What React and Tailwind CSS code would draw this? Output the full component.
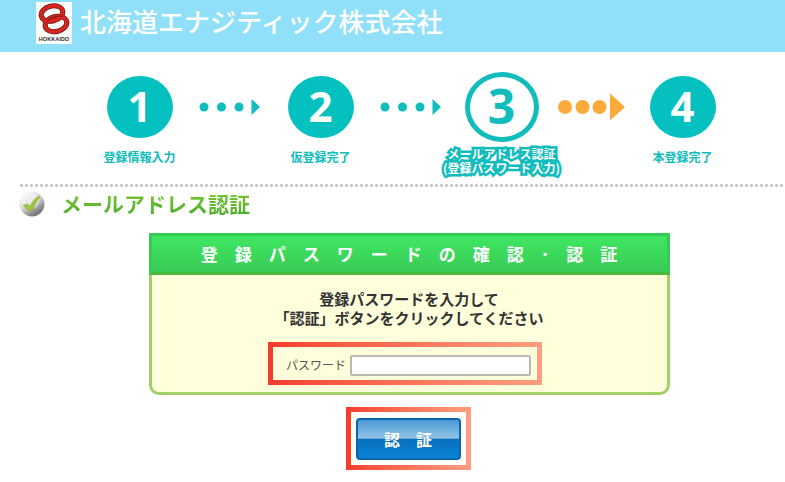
import React, { useState } from "react";

const STEPS = [
  { num: 1, lines: ["登録情報入力"] },
  { num: 2, lines: ["仮登録完了"] },
  { num: 3, lines: ["メールアドレス認証", "(登録パスワード入力)"], current: true },
  { num: 4, lines: ["本登録完了"] },
];

function CompanyLogo() {
  return (
    <svg className="h-[42px] w-9 shrink-0" viewBox="0 0 36 42" role="img" aria-label="HOKKAIDO">
      <rect width="36" height="42" fill="#fdfdfb" />
      <g fill="none" stroke="#5a1512" strokeWidth="5">
        <ellipse cx="16" cy="11.5" rx="11" ry="7.500" transform="rotate(-14 16 11.5)" />
        <ellipse cx="20" cy="22" rx="11" ry="7.500" transform="rotate(-14 20 22)" />
      </g>
      <g fill="none" stroke="#d8241f" strokeWidth="3.600">
        <ellipse cx="16" cy="11.5" rx="11" ry="7.500" transform="rotate(-14 16 11.5)" />
        <ellipse cx="20" cy="22" rx="11" ry="7.500" transform="rotate(-14 20 22)" />
      </g>
      <path d="M10 21 C13 16 19 14 27 14" fill="none" stroke="#5a1512" strokeWidth="0.8" />
      <text x="18" y="39" textAnchor="middle" fontSize="5.6" fontWeight="700" fontFamily="Liberation Sans, sans-serif" fill="#3a3431">
        HOKKAIDO
      </text>
    </svg>
  );
}

function CheckIcon() {
  return (
    <svg className="h-[26px] w-[26px] shrink-0" viewBox="0 0 26 26" aria-hidden="true">
      <defs>
        <linearGradient id="ball" x1="0.1" y1="0" x2="0.75" y2="1">
          <stop offset="0" stopColor="#ffffff" />
          <stop offset="0.5" stopColor="#d4d4d4" />
          <stop offset="1" stopColor="#5f5f5f" />
        </linearGradient>
      </defs>
      <circle cx="13" cy="13" r="12.5" fill="url(#ball)" />
      <ellipse cx="11" cy="10" rx="9.500" ry="8" fill="#ffffff" opacity="0.4" />
      <path d="M4 14.500 L8.500 13 L11 15.500 C13.500 10.500 16 7.500 20 5 L20.500 6.500 C17.500 10 15 14.500 13.500 19.500 L10 19.500 Z" fill="#9bc83a" stroke="#7fae2b" strokeWidth="0.6" />
    </svg>
  );
}

function StepArrow({ active }) {
  if (active) {
    return (
      <svg className="h-7 w-[68px] shrink-0" viewBox="0 0 68 28" fill="#fbab3c" aria-hidden="true">
        <circle cx="7" cy="14" r="7" />
        <circle cx="24.500" cy="14" r="7" />
        <circle cx="41.500" cy="14" r="7" />
        <path d="M52 0.500 L67 14 L52 27.500 Z" />
      </svg>
    );
  }
  return (
    <svg className="h-7 w-[62px] shrink-0" viewBox="0 0 62 28" fill="#10bcbc" aria-hidden="true">
      <circle cx="5" cy="14" r="4.500" />
      <circle cx="22.500" cy="14" r="4.500" />
      <circle cx="40" cy="14" r="4.500" />
      <path d="M52.500 6 L61 14 L52.500 22 Z" />
    </svg>
  );
}

function Step({ step }) {
  const circle = step.current
    ? "h-[70px] w-[74px] border-[5px] border-[#10bcbc] bg-white text-5xl text-[#10bcbc]"
    : "h-[62px] w-[66px] bg-[#04c1c0] text-[42px] text-white";
  const label = step.current
    ? "text-white [-webkit-text-stroke:5px_#10bcbc] [paint-order:stroke_fill]"
    : "pt-[3px] text-[#10bcbc]";

  return (
    <div className="flex w-[120px] flex-col items-center" aria-current={step.current ? "step" : undefined}>
      <div className="flex h-[70px] items-center">
        <div className={`flex items-center justify-center rounded-[50%] pb-[2px] font-['Open_Sans',sans-serif] leading-none font-bold ${circle}`}>
          {step.num}
        </div>
      </div>
      <div className={`mt-[5px] flex h-8 flex-col items-center text-xs leading-[14px] font-bold whitespace-nowrap ${label}`}>
        {step.lines.map((line) => (
          <span key={line}>{line}</span>
        ))}
      </div>
    </div>
  );
}

export default function App() {
  const [password, setPassword] = useState("");

  return (
    <div className="bg-white pb-3 font-['Noto_Sans_CJK_JP',sans-serif] text-[#333]">
      <header className="flex h-[52px] items-start gap-2 bg-[#90e0f9] pt-[2px] pl-9">
        <CompanyLogo />
        <p className="text-[26px] leading-[38px] font-medium text-white">北海道エナジティック株式会社</p>
      </header>

      <main className="pt-5 pl-[19px]">
        <div className="flex justify-center pb-1 pl-[18px]">
          {STEPS.map((step, i) => (
            <React.Fragment key={step.num}>
              {i > 0 && (
                <div className="flex h-[70px] w-[61px] items-center justify-center">
                  <StepArrow active={i === 3} />
                </div>
              )}
              <Step step={step} />
            </React.Fragment>
          ))}
        </div>

        <div className="mt-[1px] h-[3px] bg-[radial-gradient(circle,#c4c4c4_1px,transparent_2px)] bg-[length:5px_3px]" />

        <div className="mt-1 flex items-start gap-4">
          <CheckIcon />
          <h1 className="bg-linear-to-b from-[#7dc832] to-[#4fae2e] bg-clip-text text-[21px] leading-6 font-bold text-transparent">
            メールアドレス認証
          </h1>
        </div>

        <form className="mt-4 flex flex-col items-center pl-[14px]" onSubmit={(e) => e.preventDefault()}>
          <section className="w-full max-w-[521px]">
            <h2 className="border-[3px] border-[#33cb55] border-b-[#4db93b] bg-linear-to-b from-[#40e763] to-[#38cb54] text-center text-[17px] leading-9 font-bold text-white">
              登　録　パ　ス　ワ　ー　ド　の　確　認　･　認　証
            </h2>
            <div className="flex flex-col items-center rounded-b-[10px] border-[3px] border-t-0 border-[#a3cf68] bg-[#ffffdb] pb-[7px]">
              <p className="pt-[14px] text-center text-[15px] leading-[19px] font-bold">
                登録パスワードを入力して
                <br />
                「認証」ボタンをクリックしてください
              </p>
              <div className="mt-[15px] mr-2 bg-linear-to-r from-[#f43b2c] to-[#ff9e80] p-[5px]">
                <div className="flex h-[33px] items-center gap-1 bg-[#ffffdb] pt-[5px] pr-[6px] pb-[2px] pl-[13px]">
                  <label htmlFor="password" className="text-xs text-[#555]">
                    パスワード
                  </label>
                  <input
                    id="password"
                    type="password"
                    value={password}
                    onChange={(e) => setPassword(e.target.value)}
                    className="h-[21px] w-[181px] rounded-[2px] border-2 border-[#b9b9b0] bg-white px-1 text-xs outline-none"
                  />
                </div>
              </div>
            </div>
          </section>

          <div className="mt-3 mr-[2px] bg-linear-to-r from-[#f43b2c] to-[#ff9e80] p-[5px]">
            <div className="bg-white px-[5px] pt-[6px] pb-[5px]">
              <button
                type="submit"
                className="h-[42px] w-[105px] rounded-sm border-2 border-[#0b66b0] bg-[linear-gradient(#4a9ad4,#92c3e6_48%,#0a6fbe_50%,#0a82d4)] text-base font-bold text-white"
              >
                認　証
              </button>
            </div>
          </div>
        </form>
      </main>
    </div>
  );
}
